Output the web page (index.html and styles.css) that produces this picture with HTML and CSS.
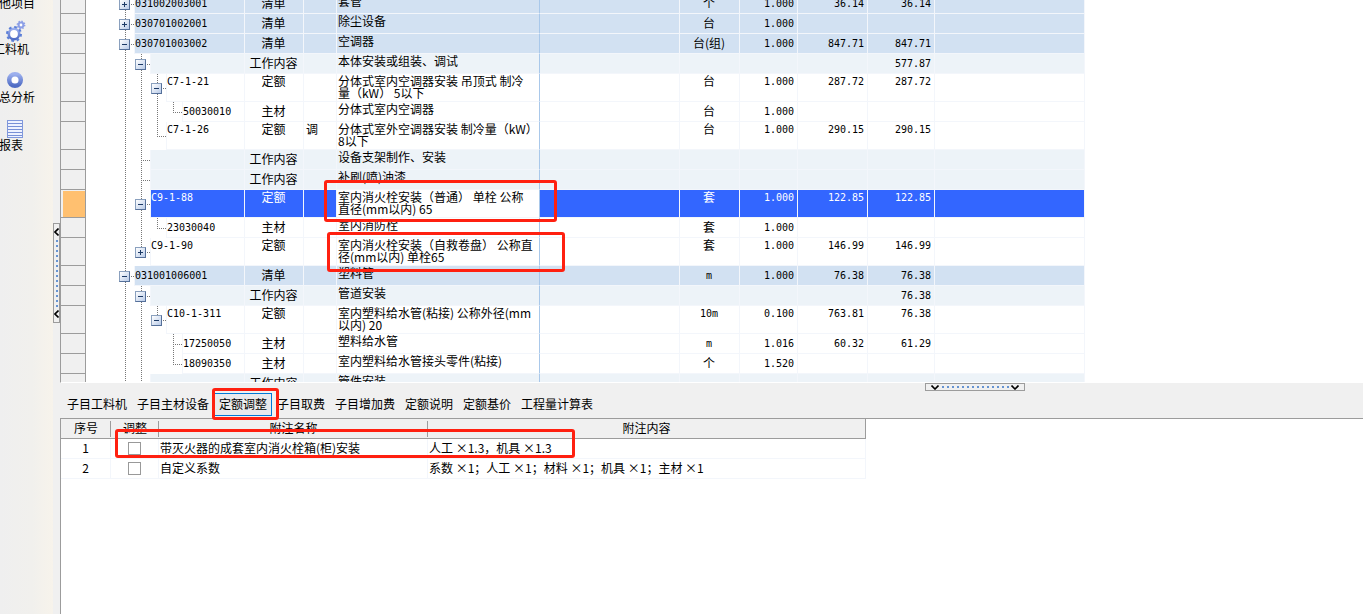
FILE: index.html
```html
<!DOCTYPE html>
<html lang="zh-CN">
<head>
<meta charset="utf-8">
<title>定额调整</title>
<link rel="stylesheet" href="styles.css">
</head>
<body>
<div class="app">
  <nav class="sidebar">
    <button class="side-item side-text" type="button">其他项目</button>
    <button class="side-item" type="button">
      <svg class="side-icon" viewBox="0 0 24 26" aria-hidden="true">
        <defs><linearGradient id="blue" x1="0" y1="0" x2="0" y2="1"><stop offset="0" stop-color="#9db0ee"/><stop offset="1" stop-color="#4f6cc4"/></linearGradient></defs>
        <circle cx="11" cy="18" r="5.200" fill="#fff" stroke="url(#blue)" stroke-width="2.600"/>
        <circle cx="11" cy="18" r="7" fill="none" stroke="#5b7fd8" stroke-width="2" stroke-dasharray="2.700 2.800"/>
        <circle cx="18" cy="9" r="2.400" fill="#fff" stroke="#8c9fe6" stroke-width="2"/>
        <circle cx="18" cy="9" r="3.700" fill="none" stroke="#8c9fe6" stroke-width="1.400" stroke-dasharray="1.400 1.500"/>
      </svg>
      <span>工料机</span>
    </button>
    <button class="side-item" type="button">
      <svg class="side-icon" viewBox="0 0 24 26" aria-hidden="true"><circle cx="12" cy="16" r="5.800" fill="#fff" stroke="url(#blue)" stroke-width="4.500"/></svg>
      <span>汇总分析</span>
    </button>
    <button class="side-item" type="button">
      <svg class="side-icon" viewBox="0 0 24 26" aria-hidden="true"><rect x="4.500" y="8.500" width="15" height="17" fill="#eef2ff" stroke="#8098dc"/><path d="M5 11.500h14M5 14.500h14M5 17.500h14M5 20.500h14M5 23.500h14" stroke="#7890d6"/></svg>
      <span>报表</span>
    </button>
  </nav>
  <div class="side-split">
    <button class="handle handle-v" type="button" aria-label="收起侧栏">
      <svg viewBox="0 0 5 8"><path d="M4.500 .5L1 4l3.500 3.500" fill="none" stroke="#000" stroke-width="1.600"/></svg>
      <span class="dots"></span>
      <svg viewBox="0 0 5 8"><path d="M4.500 .5L1 4l3.500 3.500" fill="none" stroke="#000" stroke-width="1.600"/></svg>
    </button>
  </div>
  <main class="main">
    <section class="grid-pane">
      <table class="grid">
        <colgroup><col class="c-gut"><col class="c-code"><col class="c-type"><col class="c-adj"><col class="c-name"><col class="c-spec"><col class="c-unit"><col class="c-qty"><col class="c-price"><col class="c-total"><col class="c-rest"></colgroup>
        <tbody id="rows"></tbody>
      </table>
      <div class="mark mark-a"></div>
      <div class="mark mark-b"></div>
    </section>
    <div class="bottom-split">
      <button class="handle handle-h" type="button" aria-label="收起下方面板">
        <svg viewBox="0 0 8 5"><path d="M.5 .5L4 4l3.500-3.500" fill="none" stroke="#000" stroke-width="1.600"/></svg>
        <span class="dots"></span>
        <svg viewBox="0 0 8 5"><path d="M.5 .5L4 4l3.500-3.500" fill="none" stroke="#000" stroke-width="1.600"/></svg>
      </button>
    </div>
    <div class="tabs">
      <button class="tab" type="button">子目工料机</button>
      <button class="tab" type="button">子目主材设备</button>
      <button class="tab tab-on" type="button">定额调整<span class="mark mark-tab"></span></button>
      <button class="tab" type="button">子目取费</button>
      <button class="tab" type="button">子目增加费</button>
      <button class="tab" type="button">定额说明</button>
      <button class="tab" type="button">定额基价</button>
      <button class="tab" type="button">工程量计算表</button>
    </div>
    <section class="notes-pane">
      <table class="notes">
        <colgroup><col class="n-no"><col class="n-adj"><col class="n-name"><col class="n-text"></colgroup>
        <thead><tr><th>序号</th><th>调整</th><th>附注名称</th><th>附注内容</th></tr></thead>
        <tbody>
          <tr><td class="mid">1</td><td class="mid"><input type="checkbox" aria-labelledby="note1"></td><td id="note1">带灭火器的成套室内消火栓箱(柜)安装</td><td>人工 ×1.3，机具 ×1.3</td></tr>
          <tr><td class="mid">2</td><td class="mid"><input type="checkbox" aria-labelledby="note2"></td><td id="note2">自定义系数</td><td>系数 ×1；人工 ×1；材料 ×1；机具 ×1；主材 ×1</td></tr>
        </tbody>
      </table>
      <div class="mark mark-c"></div>
    </section>
  </main>
</div>
<script src="rows.js"></script>
</body>
</html>
```

FILE: rows.js
```js
// Fields: row kind, tree slots, code, type, adjust flag, name, unit, quantity, price, total.
// Slots: v line, t tee, l elbow, b blank, p plus, m minus, e minus without line below, q plus without line below.
const rows = [
  ["item", "p", "031002003001", "清单", "", "套管", "个", "1.000", "36.14", "36.14"],
  ["item", "p", "030701002001", "清单", "", "除尘设备", "台", "1.000", "", ""],
  ["item", "m", "030701003002", "清单", "", "空调器", "台(组)", "1.000", "847.71", "847.71"],
  ["work", "vm", "", "工作内容", "", "本体安装或组装、调试", "", "", "", "577.87"],
  ["tall", "vvm", "C7-1-21", "定额", "", "分体式室内空调器安装 吊顶式 制冷<br>量（kW） 5以下", "台", "1.000", "287.72", "287.72"],
  ["", "vvvl", "50030010", "主材", "", "分体式室内空调器", "台", "1.000", "", ""],
  ["tall", "vvl", "C7-1-26", "定额", "调", "分体式室外空调器安装 制冷量（kW）<br>8以下", "台", "1.000", "290.15", "290.15"],
  ["work", "vt", "", "工作内容", "", "设备支架制作、安装", "", "", "", ""],
  ["work", "vt", "", "工作内容", "", "补刷(喷)油漆", "", "", "", ""],
  ["tall picked", "vm", "C9-1-88", "定额", "", "室内消火栓安装（普通） 单栓 公称<br>直径(mm以内) 65", "套", "1.000", "122.85", "122.85"],
  ["", "vvl", "23030040", "主材", "", "室内消防栓", "套", "1.000", "", ""],
  ["tall", "vq", "C9-1-90", "定额", "", "室内消火栓安装（自救卷盘） 公称直<br>径(mm以内) 单栓65", "套", "1.000", "146.99", "146.99"],
  ["item", "m", "031001006001", "清单", "", "塑料管", "m", "1.000", "76.38", "76.38"],
  ["work", "vm", "", "工作内容", "", "管道安装", "", "", "", "76.38"],
  ["tall", "vve", "C10-1-311", "定额", "", "室内塑料给水管(粘接) 公称外径(mm<br>以内) 20", "10m", "0.100", "763.81", "76.38"],
  ["", "vvbt", "17250050", "主材", "", "塑料给水管", "m", "1.016", "60.32", "61.29"],
  ["", "vvbl", "18090350", "主材", "", "室内塑料给水管接头零件(粘接)", "个", "1.520", "", ""],
  ["work", "vt", "", "工作内容", "", "管件安装", "", "", "", ""]
];
const slot = k => "pmeq".includes(k)
  ? `<span class="slot s-${k}"><button class="box ${"pq".includes(k) ? "plus" : ""}" type="button" aria-label="展开或收起"></button></span>`
  : `<span class="slot s-${k}"></span>`;
document.getElementById("rows").innerHTML = rows.map(([kind, tree, code, type, adj, name, unit, qty, price, total]) =>
  `<tr class="${kind}"><td class="gut"></td><td class="tree"><div class="branch">${[...tree].map(slot).join("")}<span class="code num">${code}</span></div></td>` +
  `<td class="mid">${type}</td><td>${adj}</td><td class="name">${name}</td><td></td><td class="mid${/^[\dm]+$/.test(unit) ? " num" : ""}">${unit}</td>` +
  `<td class="num right">${qty}</td><td class="num right">${price}</td><td class="num right">${total}</td><td></td></tr>`).join("");
```

FILE: styles.css
```css
* { box-sizing: border-box; }
body { margin: 0; background: #f0f0f0; color: #000; font: 12px/12px "Noto Sans CJK SC", sans-serif; }
button { font: inherit; color: inherit; padding: 0; border: 0; background: none; }
.app { display: flex; min-height: 100vh; overflow: hidden; }

.sidebar { flex: none; width: 53px; background: linear-gradient(90deg, #efefef, #f1f0ed 60%, #f7f3eb); overflow: hidden; }
.side-item { display: flex; flex-direction: column; align-items: center; width: 56px; height: 48px; margin-left: -17px; padding-top: 1px; white-space: nowrap; }
.side-text { height: 18px; padding: 0; justify-content: flex-start; margin-top: -3px; }
.side-item .side-icon { width: 24px; height: 26px; margin-left: 8px; flex: none; }
.side-item span { margin-top: 1px; }

.side-split { flex: none; width: 7px; }
.handle { display: flex; align-items: center; justify-content: space-between; border: 1px solid #9c9c9c; background: #f0f0f0; }
.handle-v { flex-direction: column; width: 7px; height: 100px; margin-top: 223px; padding: 4px 0; }
.handle-v svg { width: 5px; height: 8px; }
.handle-v .dots { width: 2px; height: 67px; background: repeating-linear-gradient(#6593d1 0 2px, transparent 2px 5px); }
.handle-h { width: 100px; height: 8px; padding: 0 5px; }
.handle-h svg { width: 8px; height: 5px; }
.handle-h .dots { width: 67px; height: 2px; background: repeating-linear-gradient(90deg, #6593d1 0 2px, transparent 2px 5px); }

.main { flex: 1; min-width: 0; display: flex; flex-direction: column; }
.grid-pane { position: relative; height: 383px; background: #fff; overflow: hidden; border-left: 1px solid #9c9c9c; border-bottom: 1px solid #fff; }
.grid { margin-top: -6px; width: 1024px; table-layout: fixed; border-collapse: separate; border-spacing: 0; }
.c-gut { width: 25px; } .c-code { width: 159px; } .c-type { width: 59px; } .c-adj { width: 33px; }
.c-name { width: 203px; } .c-spec { width: 140px; } .c-unit { width: 60px; } .c-qty { width: 58px; }
.c-price { width: 70px; } .c-total { width: 67px; } .c-rest { width: 150px; }
.grid td { height: 20px; padding: 3px 3px 0 2px; vertical-align: top; white-space: nowrap; border-right: 1px solid #f3f6fb; border-bottom: 1px solid #f3f6fb; }
.grid td.num { padding-top: 4px; }
.grid .tall td { height: 28px; padding-top: 1px; }
.grid .tall td.num { padding-top: 2px; }
.grid .item td { background: #d2e1f2; }
.grid .work td { background: #edf3f8; }
.grid .picked td { background: #3366ff; color: #fff; }
.grid td.name { padding: 1px 0 0 1px; border-right-color: #a9c8ea; }
.grid .picked .name { background: #fff; color: #000; }
.grid tr .gut { background: #f0f0f0; border-right-color: #9c9c9c; border-bottom-color: #9c9c9c; }
.grid .picked .gut { background: #ffc070; box-shadow: inset 2px 1px #f0f0f0; }
.grid tr .tree { padding: 0; background: #fff; border-bottom: 0; }
.mid { text-align: center; }
.right { text-align: right; }
.num { font-family: "DejaVu Sans Mono", monospace; font-size: 10px; }

.branch { display: flex; height: 20px; padding-left: 32px; }
.tall .branch { height: 28px; }
.code { flex: 1; padding-top: 4px; border-bottom: 1px solid #f3f6fb; border-left: 1px solid #f3f6fb; }
.tall .code { padding-top: 2px; }
.item .code { background: #d2e1f2; }
.work .code { background: #edf3f8; }
.picked .code { background: #3366ff; }
.slot { position: relative; flex: none; width: 16px; display: flex; align-items: center; }
.slot::before { content: ""; position: absolute; left: 7px; top: 0; bottom: 0; width: 1px; background: repeating-linear-gradient(#777 0 1px, transparent 1px 2px); }
.slot::after { content: ""; position: absolute; left: 7px; right: 0; top: 50%; height: 1px; background: repeating-linear-gradient(90deg, #777 0 1px, transparent 1px 2px); }
.s-v::after, .s-b::after, .s-b::before { display: none; }
.s-l::before, .s-e::before, .s-q::before { bottom: 50%; }
.box { position: relative; z-index: 1; width: 11px; height: 11px; margin: 1px 0 0 1px; border: 1px solid #7890b0; border-color: #8aa0be #55709a #55709a #8aa0be; background: linear-gradient(#1c3a66, #1c3a66) center / 5px 1px no-repeat, linear-gradient(135deg, #fff, #b9cbe8); }
.plus { background: linear-gradient(#1c3a66, #1c3a66) center / 5px 1px no-repeat, linear-gradient(#1c3a66, #1c3a66) center / 1px 5px no-repeat, linear-gradient(135deg, #fff, #b9cbe8); }

.bottom-split { height: 8px; padding-left: 865px; }
.tabs { display: flex; height: 27px; padding: 2px 0 0 2px; }
.tab { position: relative; height: 23px; padding: 0 4px 1px; border: 1px solid transparent; white-space: nowrap; }
.tab-on { border-color: #0078d7; background: #e9eaec; }

.notes-pane { position: relative; flex: 1; background: #fff; border-top: 1px solid #9c9c9c; border-left: 1px solid #9c9c9c; }
.notes { width: 805px; table-layout: fixed; border-spacing: 0; }
.n-no { width: 50px; } .n-adj { width: 48px; } .n-name { width: 269px; } .n-text { width: 438px; }
.notes th { height: 20px; padding: 0 0 2px; font-weight: normal; background: linear-gradient(#9c9c9c, #9c9c9c) right center / 1px 16px no-repeat #f0f0f0; border-bottom: 1px solid #9c9c9c; }
.notes th:last-child { background: #f0f0f0; border-right: 1px solid #9c9c9c; }
.notes td { height: 20px; padding: 0 1px 2px; white-space: nowrap; border-right: 1px solid #f3f6fb; border-bottom: 1px solid #f3f6fb; }
.notes td:has(input) { padding-bottom: 0; }
.notes input { appearance: none; display: block; width: 13px; height: 13px; margin: 0 auto; border: 1px solid #999; background: #fff; }

.mark { position: absolute; z-index: 2; border: 3px solid #ff2010; border-radius: 3px; pointer-events: none; }
.mark-a { left: 263px; top: 180px; width: 233px; height: 42px; }
.mark-b { left: 266px; top: 232px; width: 238px; height: 40px; }
.mark-tab { left: -3px; right: -8px; top: -6px; bottom: -5px; }
.mark-c { left: 54px; top: 10px; width: 460px; height: 29px; }
```
